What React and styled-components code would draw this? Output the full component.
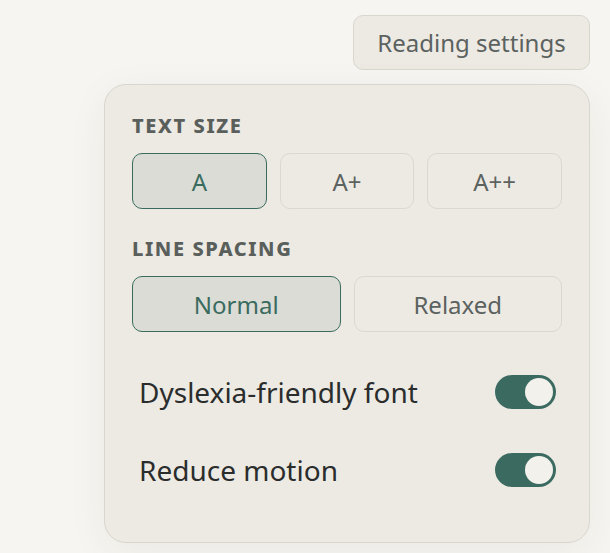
import React, { useState } from 'react';
import styled, { createGlobalStyle } from 'styled-components';

const GlobalStyle = createGlobalStyle`
  html, body {
    margin: 0;
    padding: 0;
    background: #f6f5f1;
    font-family: "Noto Sans", "DejaVu Sans", sans-serif;
  }
`;

const Page = styled.div`
  width: 610px;
  height: 553px;
  box-sizing: border-box;
  padding: 15px 20px 0 104px;
  display: flex;
  flex-direction: column;
  align-items: flex-end;
  gap: 14px;
  overflow: hidden;
`;

const TriggerButton = styled.button`
  height: 55px;
  width: 237px;
  border: 1px solid #d9d6ce;
  border-radius: 10px;
  background: #edeae3;
  color: #5b625f;
  font-family: inherit;
  font-size: 24px;
  cursor: pointer;
`;

const Panel = styled.div`
  align-self: stretch;
  box-sizing: border-box;
  height: 459px;
  padding: 29px 27px 0;
  border: 1px solid #d9d6ce;
  border-radius: 22px;
  background: #edeae4;
  box-shadow: 0 10px 40px rgba(60, 55, 40, 0.06);
  display: flex;
  flex-direction: column;
`;

const SectionLabel = styled.div`
  font-size: 20px;
  font-weight: 800;
  letter-spacing: 1.6px;
  color: #5a5f5c;
  text-transform: uppercase;
  line-height: 24px;
  margin-bottom: 15px;
`;

const Segmented = styled.div`
  display: grid;
  grid-template-columns: repeat(${(p) => p.$count}, 1fr);
  gap: 13px;
  margin-bottom: ${(p) => p.$mb || 0}px;
`;

const Option = styled.button`
  height: 56px;
  border-radius: 10px;
  border: 1px solid ${(p) => (p.$active ? '#3a6b5f' : '#dbd8d0')};
  background: ${(p) => (p.$active ? '#dadcd5' : '#edeae4')};
  color: ${(p) => (p.$active ? '#3a6b5f' : '#5b625f')};
  font-family: inherit;
  font-size: 24px;
  cursor: pointer;
`;

const ToggleList = styled.div`
  display: flex;
  flex-direction: column;
  gap: 44px;
  padding: 0 6px 0 7px;
  margin-top: 43px;
`;

const ToggleRow = styled.label`
  display: flex;
  align-items: center;
  justify-content: space-between;
  font-size: 28px;
  line-height: 34px;
  color: #2a2d2c;
  cursor: pointer;
`;

const Switch = styled.span`
  width: 61px;
  height: 34px;
  border-radius: 17px;
  background: ${(p) => (p.$on ? '#3b6b60' : '#b9b6ae')};
  display: flex;
  align-items: center;
  justify-content: ${(p) => (p.$on ? 'flex-end' : 'flex-start')};
  padding: 0 3px;
  box-sizing: border-box;
`;

const Knob = styled.span`
  width: 28px;
  height: 28px;
  border-radius: 50%;
  background: #f3f1ec;
`;

export default function App() {
  const [size, setSize] = useState('A');
  const [spacing, setSpacing] = useState('Normal');
  const [dyslexic, setDyslexic] = useState(true);
  const [reduceMotion, setReduceMotion] = useState(true);

  return (
    <>
      <GlobalStyle />
      <Page>
        <TriggerButton>Reading settings</TriggerButton>
        <Panel>
          <SectionLabel>Text size</SectionLabel>
          <Segmented $count={3} $mb={28}>
            {['A', 'A+', 'A++'].map((s) => (
              <Option key={s} $active={size === s} onClick={() => setSize(s)}>
                {s}
              </Option>
            ))}
          </Segmented>
          <SectionLabel>Line spacing</SectionLabel>
          <Segmented $count={2}>
            {['Normal', 'Relaxed'].map((s) => (
              <Option key={s} $active={spacing === s} onClick={() => setSpacing(s)}>
                {s}
              </Option>
            ))}
          </Segmented>
          <ToggleList>
            <ToggleRow onClick={() => setDyslexic(!dyslexic)}>
              Dyslexia-friendly font
              <Switch $on={dyslexic}>
                <Knob />
              </Switch>
            </ToggleRow>
            <ToggleRow onClick={() => setReduceMotion(!reduceMotion)}>
              Reduce motion
              <Switch $on={reduceMotion}>
                <Knob />
              </Switch>
            </ToggleRow>
          </ToggleList>
        </Panel>
      </Page>
    </>
  );
}
